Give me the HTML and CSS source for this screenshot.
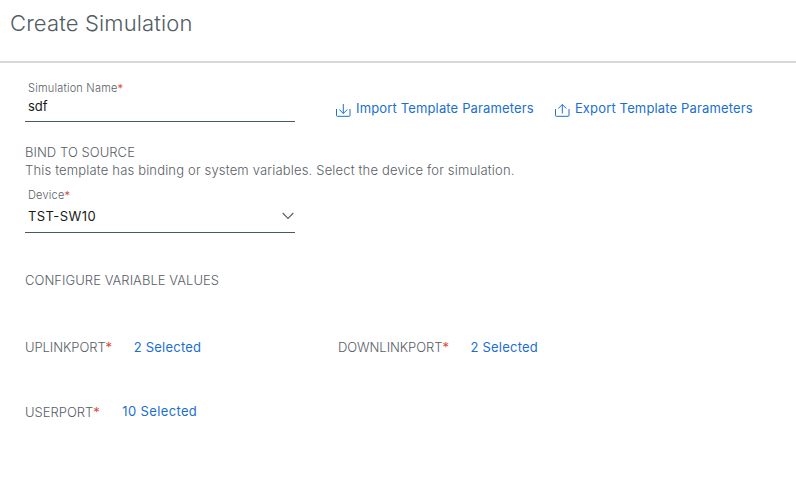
FILE: index.html
```html
<!DOCTYPE html>
<html lang="en">
<head>
<meta charset="utf-8">
<title>Create Simulation</title>
<link rel="stylesheet" href="styles.css">
</head>
<body>
<header class="header"><h1 class="title">Create Simulation</h1></header>
<main class="content">
  <div class="top-row">
    <div class="field name-field">
      <label class="field-label">Simulation Name<span class="req">*</span></label>
      <div class="field-value">sdf</div>
    </div>
    <a class="action import">
      <svg class="icon" width="16" height="14" viewBox="0 0 16 14"><path d="M.5 5v6.500q0 .8.8.8h11.900q.8 0 .8-.8V5M7.300 0v9.500M3.300 5.500l4 4 4-4"/></svg>
      <span>Import Template Parameters</span>
    </a>
    <a class="action export">
      <svg class="icon" width="16" height="14" viewBox="0 0 16 14"><path d="M.5 5v6.500q0 .8.8.8h11.900q.8 0 .8-.8V5M7.300 9.500V.5M3.300 4.500l4-4 4 4"/></svg>
      <span>Export Template Parameters</span>
    </a>
  </div>
  <h2 class="section bind">BIND TO SOURCE</h2>
  <p class="hint">This template has binding or system variables. Select the device for simulation.</p>
  <div class="field device-field">
    <label class="field-label device-label">Device<span class="req">*</span></label>
    <div class="field-value select"><span class="device-name">TST-SW10</span>
      <svg class="chevron" width="12" height="8" viewBox="0 0 12 8"><path d="M.7 1l5.300 5.500L11.300 1"/></svg>
    </div>
  </div>
  <h2 class="section configure">CONFIGURE VARIABLE VALUES</h2>
  <div class="variables">
    <div class="variable"><span class="var-name">UPLINKPORT</span><span class="req">*</span><a class="selected">2 Selected</a></div>
    <div class="variable"><span class="var-name">DOWNLINKPORT</span><span class="req">*</span><a class="selected">2 Selected</a></div>
    <div class="variable user"><span class="var-name">USERPORT</span><span class="req">*</span><a class="selected">10 Selected</a></div>
  </div>
</main>
</body>
</html>
```
FILE: styles.css
```css
* { box-sizing: border-box; }
body {
  margin: 0;
  background: #fff;
  color: #596066;
  font: 300 13px/18px Inter, "Liberation Sans", sans-serif;
  white-space: nowrap;
}
.header {
  height: 63px;
  padding: 8px 10px 0;
  border-bottom: 2px solid #d5d9dc;
}
.title {
  margin: 0;
  color: #515d63;
  font-size: 22px;
  font-weight: 300;
  line-height: 30px;
  letter-spacing: 0.15px;
}
.content { padding: 16px 25px 0; }
.top-row { display: flex; height: 43px; }
.field {
  width: 270px;
  padding: 0 3px;
  border-bottom: 1px solid #4d5960;
}
.field-label {
  display: block;
  height: 18px;
  font-size: 11px;
  letter-spacing: 0.2px;
}
.field-value {
  color: #17191b;
  font-size: 13px;
  font-weight: 400;
}
.device-name { letter-spacing: 0.4px; }
.req { color: #dc4a38; font-weight: 400; }
.action {
  display: flex;
  gap: 4px;
  height: 18px;
  margin-top: 20px;
  color: #1b6fd0;
  font-weight: 400;
  letter-spacing: 0.15px;
}
.import { margin-left: 41px; }
.export { margin-left: 21px; }
.icon { margin-top: 5px; fill: none; stroke: #1b70d2; stroke-width: 1; }
.section {
  margin: 0;
  font-size: 13px;
  font-weight: 300;
}
.bind { margin-top: 21px; letter-spacing: 0.05px; }
.hint { margin: 0; letter-spacing: 0.17px; }
.device-field { height: 47px; margin-top: 7px; }
.select {
  display: flex;
  justify-content: space-between;
  height: 24px;
  padding-top: 3px;
}
.chevron { margin: 5px -2px 0 0; fill: none; stroke: #596066; stroke-width: 1.1; }
.configure { margin-top: 38px; letter-spacing: 0.05px; }
.variables {
  display: grid;
  grid-template-columns: 313px 300px;
  grid-auto-rows: 64px;
  margin-top: 49px;
}
.variable { display: flex; }
.var-name { letter-spacing: -0.07px; }
.selected {
  margin-left: 21.5px;
  color: #1b6fd0;
  font-weight: 400;
  letter-spacing: 0.23px;
}
.user .var-name, .user .req { padding-top: 1px; }
.user .var-name { letter-spacing: 0; }
.user .selected { margin-left: 22.5px; letter-spacing: 0.36px; }
```
